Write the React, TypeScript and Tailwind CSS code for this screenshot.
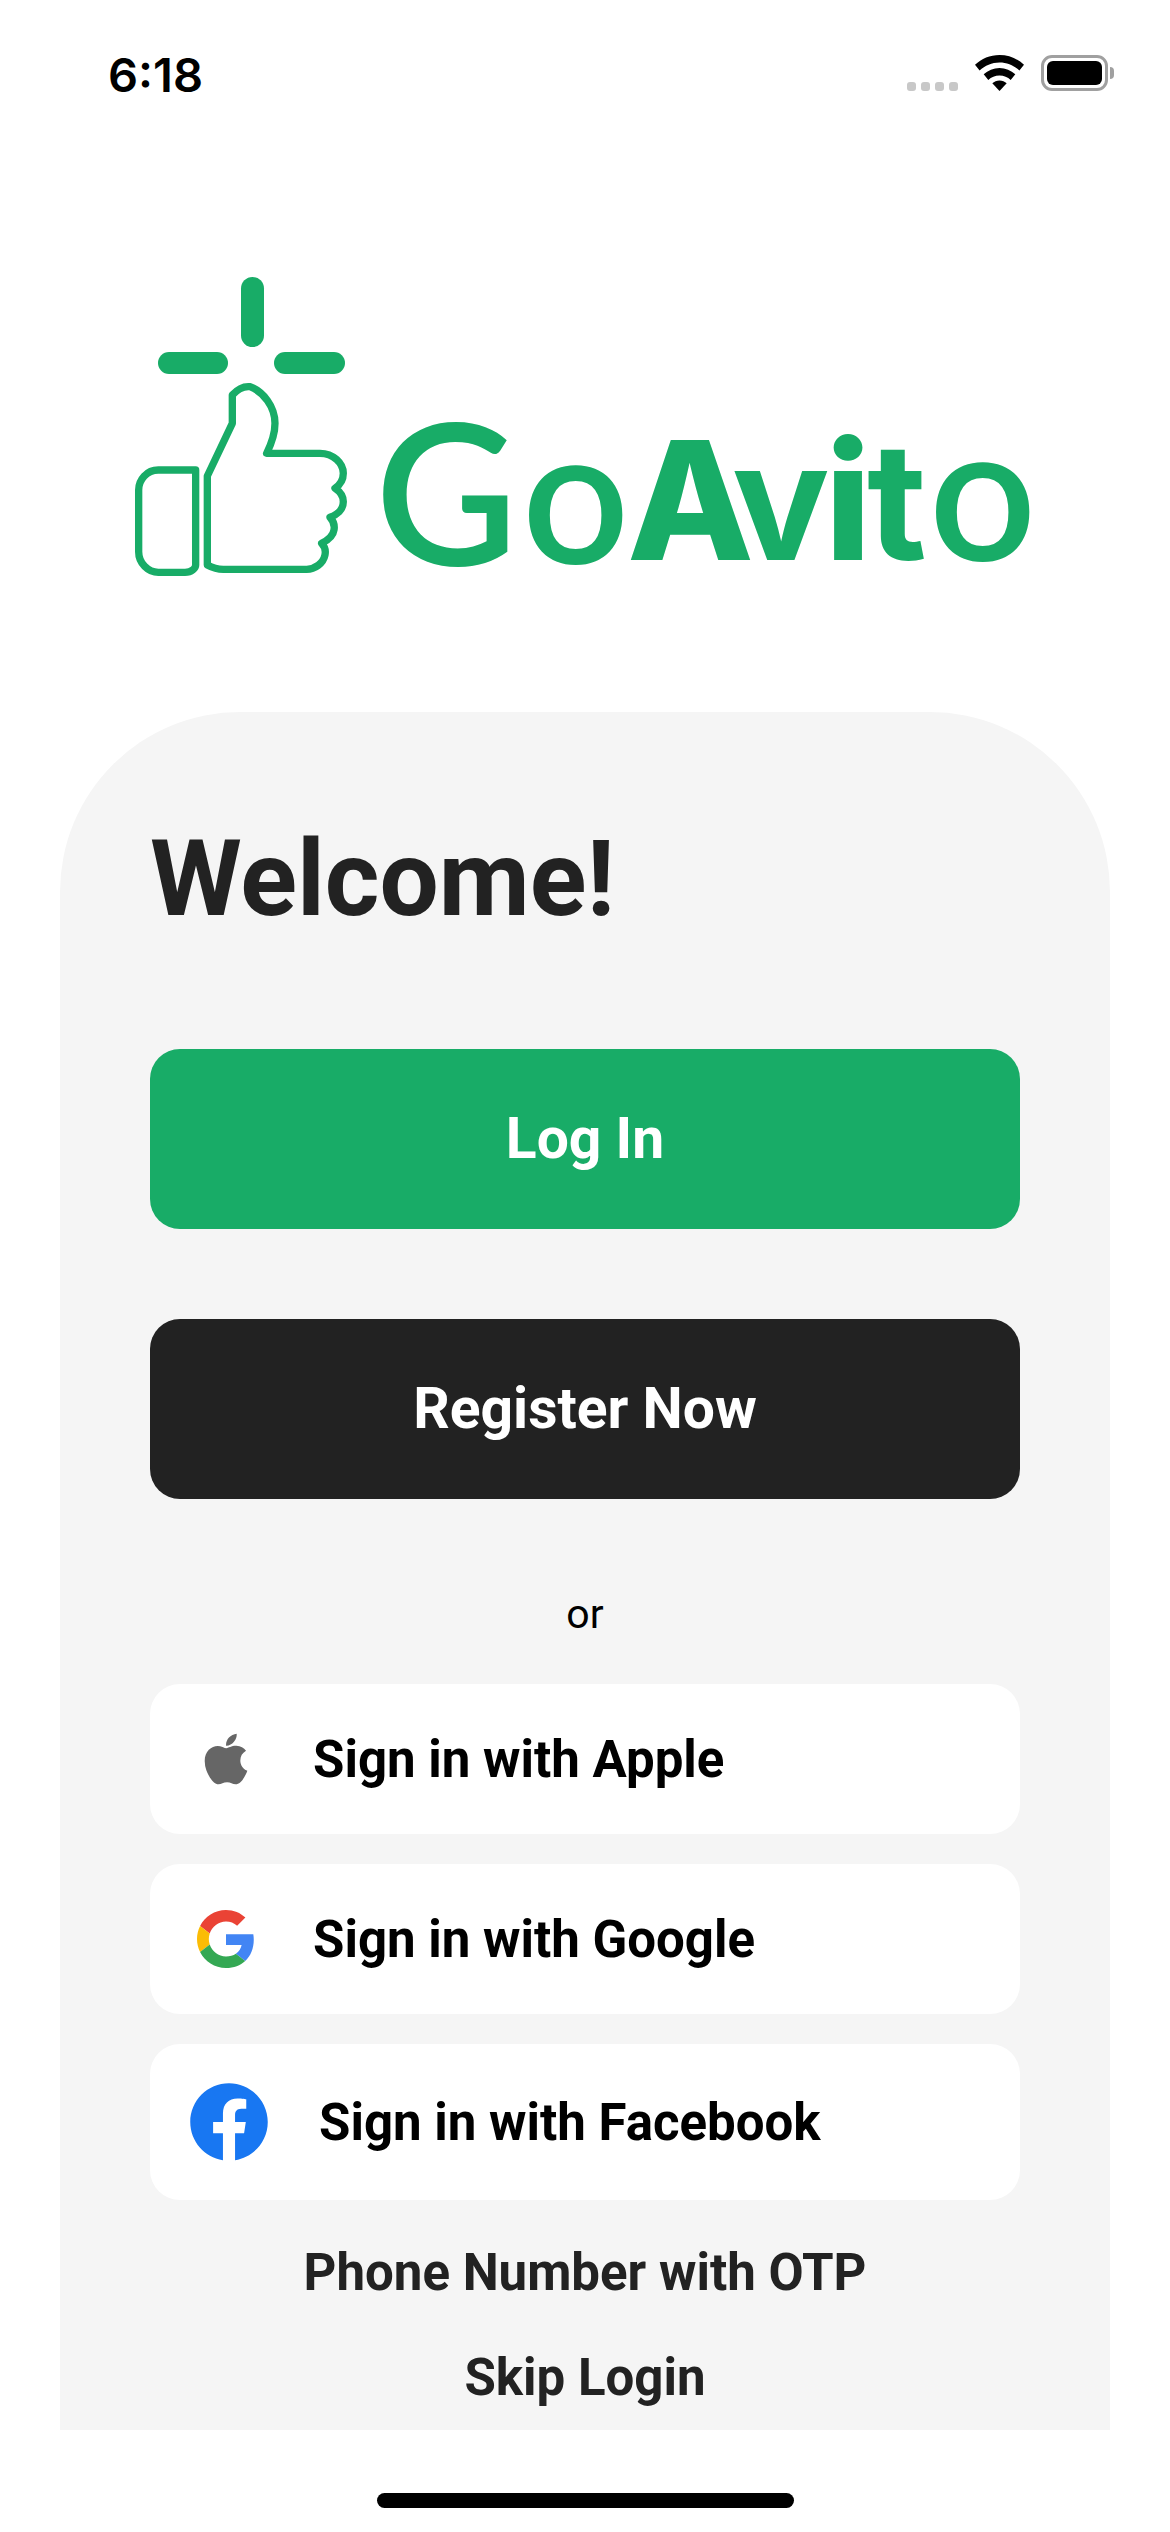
import { FaApple, FaFacebook } from "react-icons/fa";

const green = "#18AC67";

function Wifi() {
  return (
    <svg viewBox="0 0 49 36" className="w-[49px] h-[36px]">
      <path d="M24.5 0C15 0 6.5 3.7 0 9.8l4.6 5.6C10 10.4 16.9 7.4 24.5 7.4s14.5 3 19.900 8L49 9.8C42.500 3.700 34 0 24.500 0Z" fill="#000" />
      <path d="M24.500 13C18.500 13 13 15.300 8.700 19.300l4.600 5.600c3-2.800 6.900-4.500 11.200-4.500s8.200 1.700 11.200 4.500l4.600-5.600C36 15.300 30.500 13 24.500 13Z" fill="#000" />
      <path d="M24.500 25.500c-2.800 0-5.300 1.100-7.200 2.800L24.500 36l7.200-7.700c-1.900-1.700-4.400-2.800-7.200-2.800Z" fill="#000" />
    </svg>
  );
}

function Battery() {
  return (
    <div className="flex items-center gap-[2px]">
      <div className="w-[67px] h-[36px] rounded-[11px] border-[3px] border-[#a0a0a0] p-[3px]">
        <div className="w-full h-full bg-black rounded-[6px]" />
      </div>
      <div className="w-[4px] h-[12px] rounded-r-full bg-[#a0a0a0]" />
    </div>
  );
}

function StatusBar() {
  return (
    <div className="h-[130px] flex items-start justify-between pl-[108px] pr-[56px] pt-[56px]">
      <span className="text-[47px] leading-[38px] font-semibold text-black [font-family:Inter,sans-serif]">6:18</span>
      <div className="flex items-center mt-[-1px]">
        <div className="flex gap-[5px] mt-[27px] mr-[17px]">
          <div className="w-[9px] h-[9px] rounded-[3px] bg-[#c8c8c8]" />
          <div className="w-[9px] h-[9px] rounded-[3px] bg-[#c8c8c8]" />
          <div className="w-[9px] h-[9px] rounded-[3px] bg-[#c8c8c8]" />
          <div className="w-[9px] h-[9px] rounded-[3px] bg-[#c8c8c8]" />
        </div>
        <Wifi />
        <div className="w-[17px]" />
        <Battery />
      </div>
    </div>
  );
}

// page coordinates, so the shapes can be read straight off the screenshot
function Logo() {
  return (
    <svg viewBox="130 270 910 310" className="w-[910px] h-[310px] ml-[130px] mt-[140px] overflow-visible">
      <g transform="translate(110 250) scale(0.3333)" fill="none" stroke={green} strokeWidth="22" strokeLinejoin="round">
        <path d="M257 660H145C110 660 86 690 86 720V905C86 940 115 967 145 967H225C245 967 257 955 257 945Z" />
        <path d="M292 945V678L367 520V435C385 415 400 408 420 410C460 425 495 470 495 520C495 550 480 590 470 610H630C670 610 700 640 700 670C700 690 690 705 675 715C690 725 700 740 700 755C700 780 680 795 660 802C672 815 675 825 672 840C670 855 655 870 635 880C645 890 648 900 645 915C640 940 615 958 590 958H340C320 958 305 952 292 945Z" />
      </g>
      <rect x="241" y="277" width="23" height="70" rx="11.500" fill={green} />
      <rect x="158" y="352" width="70" height="22" rx="11" fill={green} />
      <rect x="274" y="352" width="71" height="22" rx="11" fill={green} />
      <text fill={green} fontFamily="Inter, sans-serif">
        <tspan x="375" y="565" fontSize="196" fontWeight="600" fontFamily="Lato, sans-serif">G</tspan>
        <tspan x="522" y="564" fontSize="188" fontWeight="600" fontFamily="Lato, sans-serif">o</tspan>
        <tspan x="627" y="560" fontSize="165" fontWeight="800">A</tspan>
        <tspan x="732" y="560" fontSize="163" fontWeight="700">v</tspan>
        <tspan x="825" y="560" fontSize="163" fontWeight="800">i</tspan>
        <tspan x="867" y="560" fontSize="163" fontWeight="700">t</tspan>
        <tspan x="929" y="561" fontSize="188" fontWeight="600" fontFamily="Lato, sans-serif">o</tspan>
      </text>
    </svg>
  );
}

function GoogleIcon() {
  return (
    <svg viewBox="0 0 48 48" className="w-[58px] h-[58px]">
      <path fill="#EA4335" d="M24 9.500c3.540 0 6.710 1.220 9.210 3.600l6.850-6.850C35.900 2.380 30.470 0 24 0 14.620 0 6.510 5.380 2.560 13.220l7.980 6.190C12.430 13.720 17.740 9.500 24 9.500z" />
      <path fill="#4285F4" d="M46.980 24.550c0-1.570-.15-3.090-.38-4.550H24v9.020h12.940c-.58 2.960-2.260 5.480-4.780 7.180l7.730 6c4.510-4.180 7.090-10.360 7.090-17.650z" />
      <path fill="#FBBC05" d="M10.530 28.590c-.48-1.450-.76-2.990-.76-4.590s.27-3.140.76-4.590l-7.980-6.190C.92 16.460 0 20.120 0 24c0 3.880.92 7.540 2.560 10.780l7.970-6.190z" />
      <path fill="#34A853" d="M24 48c6.480 0 11.930-2.130 15.890-5.810l-7.730-6c-2.150 1.450-4.920 2.300-8.160 2.300-6.260 0-11.570-4.220-13.470-9.910l-7.980 6.190C6.510 42.620 14.620 48 24 48z" />
    </svg>
  );
}

interface SocialProps {
  label: string;
  icon: React.ReactNode;
  tall?: boolean;
}

function SocialButton({ label, icon, tall }: SocialProps) {
  return (
    <div className={`${tall ? "h-[156px] pl-[39px]" : "h-[150px] pl-[47px]"} bg-white rounded-[30px] flex items-center`}>
      <div className={`${tall ? "w-[130px]" : "w-[116px]"} flex items-center`}>{icon}</div>
      <span className="text-[51px] font-bold text-black leading-none">{label}</span>
    </div>
  );
}

export default function App() {
  return (
    <div className="w-[1170px] h-[2532px] bg-white flex flex-col [font-family:Roboto,sans-serif]">
      <StatusBar />
      <Logo />
      <div className="mx-[60px] mt-[132px] h-[1718px] bg-[#f5f5f5] rounded-t-[180px] px-[90px] pt-[108px]">
        <h1 className="text-[105px] leading-[120px] font-bold text-[#222222]">Welcome!</h1>
        <button className="mt-[109px] w-full h-[180px] rounded-[30px] bg-[#18ac67] text-white text-[57px] font-bold">Log In</button>
        <button className="mt-[90px] w-full h-[180px] rounded-[30px] bg-[#222222] text-white text-[57px] font-bold">Register Now</button>
        <p className="mt-[90px] text-center text-[41px] leading-[50px] text-black">or</p>
        <div className="mt-[45px] flex flex-col gap-[30px]">
          <SocialButton label="Sign in with Apple" icon={<FaApple className="w-[58px] h-[58px] text-[#666666]" />} />
          <SocialButton label="Sign in with Google" icon={<GoogleIcon />} />
          <SocialButton tall label="Sign in with Facebook" icon={<FaFacebook className="w-[80px] h-[80px] text-[#1877f2]" />} />
        </div>
        <p className="mt-[43px] text-center text-[51px] leading-[60px] font-bold text-[#222222]">Phone Number with OTP</p>
        <p className="mt-[45px] text-center text-[51px] leading-[60px] font-bold text-[#222222]">Skip Login</p>
      </div>
      <div className="flex-1 flex justify-center pt-[63px]">
        <div className="w-[417px] h-[15px] rounded-full bg-black" />
      </div>
    </div>
  );
}
